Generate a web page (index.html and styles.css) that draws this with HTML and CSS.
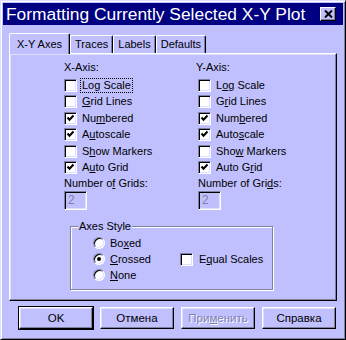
FILE: index.html
```html
<!DOCTYPE html>
<html>
<head>
    <title>Formatting Currently Selected X-Y Plot</title>
    <link rel="stylesheet" href="styles.css">
</head>
<body>
    <div class="window">
        <div class="titlebar">
            <span class="title">Formatting Currently Selected X-Y Plot</span>
            <span class="close">
                <svg width="9" height="8" viewBox="0 0 9 8"><path d="M1 0.5 L8 7.5 M8 0.5 L1 7.5" stroke="#000" stroke-width="2" fill="none"/></svg>
            </span>
        </div>

        <div class="tabs">
            <div class="tab active">X-Y Axes</div>
            <div class="tab">Traces</div>
            <div class="tab">Labels</div>
            <div class="tab">Defaults</div>
        </div>

        <div class="panel">
            <div class="axes">
                <div class="col">
                    <div class="heading">X-Axis:</div>
                    <div class="row"><span class="box"></span><span class="text focus">Log Scale</span></div>
                    <div class="row"><span class="box"></span><span class="text"><u>G</u>rid Lines</span></div>
                    <div class="row"><span class="box checked"><svg width="11" height="11" viewBox="0 0 11 11"><polyline points="2.5,4.5 4.5,6.8 8.5,2.5" stroke="#000" stroke-width="2" fill="none"/></svg></span><span class="text">Nu<u>m</u>bered</span></div>
                    <div class="row"><span class="box checked"><svg width="11" height="11" viewBox="0 0 11 11"><polyline points="2.5,4.5 4.5,6.8 8.5,2.5" stroke="#000" stroke-width="2" fill="none"/></svg></span><span class="text">A<u>u</u>toscale</span></div>
                    <div class="row"><span class="box"></span><span class="text">S<u>h</u>ow Markers</span></div>
                    <div class="row"><span class="box checked"><svg width="11" height="11" viewBox="0 0 11 11"><polyline points="2.5,4.5 4.5,6.8 8.5,2.5" stroke="#000" stroke-width="2" fill="none"/></svg></span><span class="text">A<u>u</u>to Grid</span></div>
                    <div class="heading grids">Number o<u>f</u> Grids:</div>
                    <div class="field">2</div>
                </div>
                <div class="col">
                    <div class="heading yaxis">Y-Axis:</div>
                    <div class="row"><span class="box"></span><span class="text">L<u>o</u>g Scale</span></div>
                    <div class="row"><span class="box"></span><span class="text">G<u>r</u>id Lines</span></div>
                    <div class="row"><span class="box checked"><svg width="11" height="11" viewBox="0 0 11 11"><polyline points="2.5,4.5 4.5,6.8 8.5,2.5" stroke="#000" stroke-width="2" fill="none"/></svg></span><span class="text">Num<u>b</u>ered</span></div>
                    <div class="row"><span class="box checked"><svg width="11" height="11" viewBox="0 0 11 11"><polyline points="2.5,4.5 4.5,6.8 8.5,2.5" stroke="#000" stroke-width="2" fill="none"/></svg></span><span class="text">Auto<u>s</u>cale</span></div>
                    <div class="row"><span class="box"></span><span class="text">Sho<u>w</u> Markers</span></div>
                    <div class="row"><span class="box checked"><svg width="11" height="11" viewBox="0 0 11 11"><polyline points="2.5,4.5 4.5,6.8 8.5,2.5" stroke="#000" stroke-width="2" fill="none"/></svg></span><span class="text">Auto G<u>r</u>id</span></div>
                    <div class="heading grids">Number of Gri<u>d</u>s:</div>
                    <div class="field">2</div>
                </div>
            </div>

            <fieldset class="group">
                <legend>Axes Style</legend>
                <div class="group-grid">
                    <div class="row"><span class="radio"></span><span class="text">Bo<u>x</u>ed</span></div>
                    <div></div>
                    <div class="row"><span class="radio on"></span><span class="text"><u>C</u>rossed</span></div>
                    <div class="row"><span class="box"></span><span class="text equal">E<u>q</u>ual Scales</span></div>
                    <div class="row"><span class="radio"></span><span class="text"><u>N</u>one</span></div>
                </div>
            </fieldset>
        </div>

        <div class="buttons">
            <button class="default">OK</button>
            <button>Отмена</button>
            <button disabled>При<u>м</u>енить</button>
            <button>Справка</button>
        </div>
    </div>
</body>
</html>
```

FILE: styles.css
```css
body {
    margin: 0;
    font-family: "Liberation Sans", Arial, sans-serif;
    font-size: 11px;
    color: #000;
}
.window {
    width: 346px;
    height: 340px;
    box-sizing: border-box;
    background: #c0c0ff;
    border: 1px solid;
    border-color: #dfdfff #000 #000 #dfdfff;
    box-shadow: inset 1px 1px #fff, inset -1px -1px #8080a0;
    padding: 2px;
}
.titlebar {
    height: 22px;
    background: #000080;
    display: flex;
    align-items: center;
    justify-content: space-between;
    padding-left: 3px;
}
.title {
    color: #fff;
    font-size: 17.4px;
    line-height: 22px;
    white-space: nowrap;
}
.close {
    width: 16px;
    height: 14px;
    box-sizing: border-box;
    margin-right: 7px;
    background: #c0c0ff;
    border: 1px solid;
    border-color: #fff #000 #000 #fff;
    box-shadow: inset -1px -1px #8080a0;
    display: flex;
    align-items: center;
    justify-content: center;
}
.tabs {
    margin-top: 8px;
    height: 20px;
    padding-left: 6px;
    display: flex;
    align-items: flex-end;
}
.tab {
    height: 18px;
    box-sizing: border-box;
    padding: 0 4px;
    line-height: 16px;
    border: 1px solid;
    border-bottom: none;
    border-color: #fff #000 #000 #fff;
    border-radius: 2px 2px 0 0;
    box-shadow: inset -1px 0 #8080a0;
}
.tab.active {
    height: 21px;
    margin-bottom: -1px;
    padding: 0 7px;
    line-height: 20px;
    position: relative;
    background: #c0c0ff;
}
.panel {
    margin: 0 6px;
    height: 248px;
    box-sizing: border-box;
    border: 1px solid;
    border-color: #fff #000 #000 #fff;
    box-shadow: inset -1px -1px #8080a0, inset 1px 1px #dfdfff;
    padding: 6px 0 0 54px;
}
.axes {
    display: grid;
    grid-template-columns: 134px 134px;
}
.heading {
    height: 14px;
    line-height: 14px;
    margin-bottom: 3px;
    white-space: nowrap;
}
.heading.yaxis {
    margin-left: -2px;
}
.heading.grids {
    margin: 0;
}
.row {
    height: 16.5px;
    display: flex;
    align-items: center;
    white-space: nowrap;
}
.text {
    margin-left: 5px;
    line-height: 13px;
}
.text.focus {
    margin-left: 4px;
    padding: 0 1px;
    outline: 1px dotted #000;
    outline-offset: 0;
}
.box {
    width: 13px;
    height: 13px;
    flex: none;
    box-sizing: border-box;
    background: #fff;
    border: 1px solid;
    border-color: #8080a0 #fff #fff #8080a0;
    box-shadow: inset 1px 1px #000, inset -1px -1px #dfdfff;
}
.box svg {
    display: block;
}
.field {
    margin-top: 1px;
    width: 23px;
    height: 19px;
    box-sizing: border-box;
    border: 1px solid;
    border-color: #8080a0 #fff #fff #8080a0;
    box-shadow: inset 1px 1px #000, inset -1px -1px #dfdfff;
    color: #8080a0;
    padding-left: 3px;
    line-height: 17px;
    font-size: 12px;
}
.group {
    margin: 9px 0 0 6px;
    width: 203px;
    height: 71px;
    box-sizing: border-box;
    border: 1px solid #8080a0;
    box-shadow: 1px 1px #fff, inset 1px 1px #fff;
    padding: 0;
}
.group legend {
    margin-left: 7px;
    padding: 0 1px;
    line-height: 14px;
    background: #c0c0ff;
}
.group-grid {
    margin-top: 2px;
    padding-left: 22px;
    display: grid;
    grid-template-columns: 87px auto;
}
.group-grid .row {
    height: 16px;
}
.group-grid .text.equal {
    margin-left: 6px;
}
.radio {
    width: 12px;
    height: 12px;
    flex: none;
    box-sizing: border-box;
    border-radius: 50%;
    background: #fff;
    border: 1px solid;
    border-color: #8080a0 #fff #fff #8080a0;
    box-shadow: inset 1px 1px #000, inset -1px -1px #dfdfff;
    display: flex;
    align-items: center;
    justify-content: center;
}
.radio.on::after {
    content: "";
    width: 4px;
    height: 4px;
    border-radius: 50%;
    background: #000;
}
.buttons {
    margin-top: 6px;
    display: flex;
    justify-content: flex-end;
    gap: 7px;
    padding-right: 7px;
}
button {
    width: 74px;
    height: 22px;
    box-sizing: border-box;
    background: #c0c0ff;
    border: 1px solid;
    border-color: #fff #000 #000 #fff;
    box-shadow: inset -1px -1px #8080a0, inset 1px 1px #dfdfff;
    font-family: "Liberation Sans", Arial, sans-serif;
    font-size: 11.5px;
    font-weight: normal;
    color: #000;
    padding: 0;
}
button.default {
    outline: 1px solid #000;
    outline-offset: 0;
}
button:disabled {
    color: #8080b0;
    text-shadow: 1px 1px #fff;
}
```
